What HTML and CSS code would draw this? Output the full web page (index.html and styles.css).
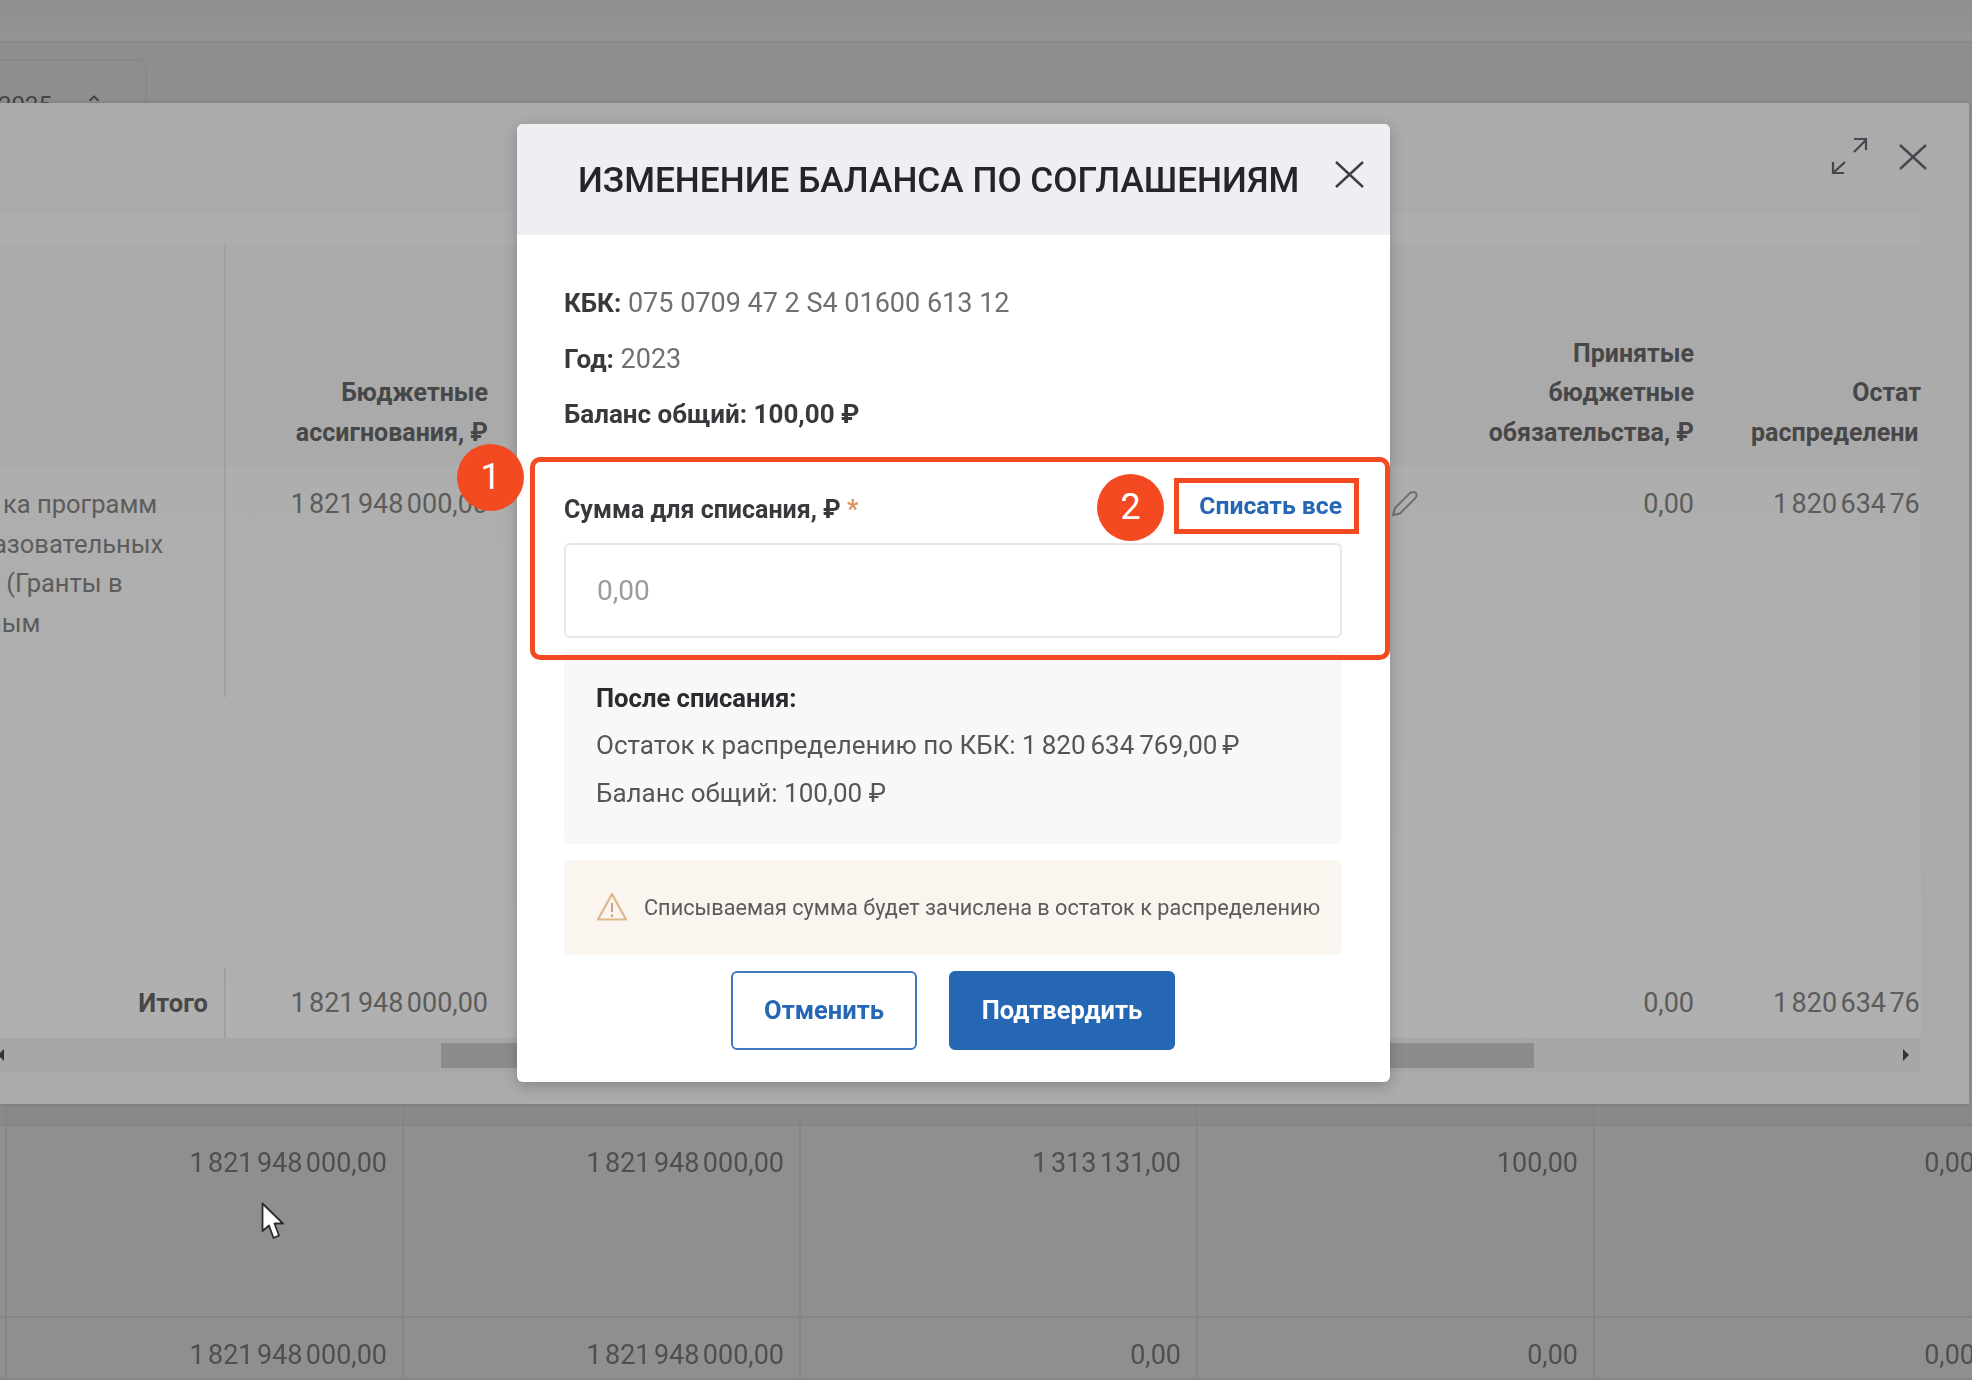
FILE: index.html
```html
<!DOCTYPE html>
<html lang="ru">
<head>
<meta charset="utf-8">
<title>Изменение баланса по соглашениям</title>
<link rel="stylesheet" href="styles.css">
</head>
<body>
<div class="screen">
  <div class="page">
    <div class="topbar"></div>
    <div class="toolbar"><div class="year-tab"><span class="year-text">2025 ⌄ ⌃</span></div></div>
    <div class="under-panel"></div>
    <div class="bg-head">
      <div class="bg-cell stub"></div><div class="bg-cell"></div><div class="bg-cell"></div><div class="bg-cell"></div><div class="bg-cell"></div><div class="bg-cell"></div>
    </div>
    <div class="bg-row tall">
      <div class="bg-cell stub"></div>
      <div class="bg-cell">1 821 948 000,00</div>
      <div class="bg-cell">1 821 948 000,00</div>
      <div class="bg-cell">1 313 131,00</div>
      <div class="bg-cell">100,00</div>
      <div class="bg-cell">0,00</div>
    </div>
    <div class="bg-row">
      <div class="bg-cell stub"></div>
      <div class="bg-cell">1 821 948 000,00</div>
      <div class="bg-cell">1 821 948 000,00</div>
      <div class="bg-cell">0,00</div>
      <div class="bg-cell">0,00</div>
      <div class="bg-cell">0,00</div>
    </div>
    <svg class="cursor" viewBox="0 0 24 38" width="24" height="38"><path d="M1.5 1.5V29L8 23.5L12.5 36L18 33.5L13.5 21.5H22Z" fill="#fff" stroke="#2b2b2b" stroke-width="1.8" stroke-linejoin="round"/></svg>
  </div>

  <section class="panel">
    <header class="panel-head">
      <svg class="expand-icon" viewBox="0 0 37 38" width="37" height="38"><path d="M2 36L14 25M23 15L35 3M23 2H35V13M2 25V36H13" fill="none" stroke="#45484f" stroke-width="2.2"/></svg>
      <svg class="panel-close" viewBox="0 0 28 26" width="28" height="26"><path d="M1 1L27 25M27 1L1 25" fill="none" stroke="#45484f" stroke-width="2.4"/></svg>
    </header>
    <div class="tbl">
      <div class="tbl-head">
        <div class="th th-stub"></div>
        <div class="th">Бюджетные<br>ассигнования, ₽</div>
        <div class="th">Принятые<br>бюджетные<br>обязательства, ₽</div>
        <div class="th th-clip"><span class="clip-line">Остат</span><span class="clip-line">распределени</span></div>
      </div>
      <div class="tbl-row">
        <div class="td-stub">
          <div class="stub-line line-a">ка программ</div>
          <div class="stub-line line-b">азовательных</div>
          <div class="stub-line line-c">я (Гранты в</div>
          <div class="stub-line line-d">ным</div>
        </div>
        <div class="td">1 821 948 000,00</div>
        <div class="td">0,00</div>
        <div class="td td-clip">1 820 634 76</div>
      </div>
      <div class="tbl-total">
        <div class="total-label">Итого</div>
        <div class="td">1 821 948 000,00</div>
        <div class="td">0,00</div>
        <div class="td td-clip">1 820 634 76</div>
      </div>
      <div class="scrollbar">
        <span class="arrow arrow-left"></span>
        <span class="thumb"></span>
        <span class="arrow arrow-right"></span>
      </div>
    </div>
    <svg class="pencil" viewBox="0 0 28 28" width="28" height="28"><path d="M3 25L5 18L20 3C22 1.5 25 1.5 26 3C27 5 26.500 7 25 8.500L10 23.500Z" fill="none" stroke="#6e7076" stroke-width="2"/></svg>
  </section>

  <section class="modal">
    <header class="modal-head">
      <h1 class="modal-title">ИЗМЕНЕНИЕ БАЛАНСА ПО СОГЛАШЕНИЯМ</h1>
      <svg class="modal-close" viewBox="0 0 29 27" width="29" height="27"><path d="M1 1L28 26M28 1L1 26" fill="none" stroke="#3d3f45" stroke-width="2.4"/></svg>
    </header>
    <div class="modal-body">
      <p class="meta"><b>КБК:</b> 075 0709 47 2 S4 01600 613 12</p>
      <p class="meta"><b>Год:</b> 2023</p>
      <p class="meta"><b>Баланс общий: 100,00 ₽</b></p>
      <div class="field-head">
        <span class="field-label">Сумма для списания, ₽ <i class="req">*</i></span>
        <a class="write-all">Списать все</a>
      </div>
      <div class="input"><span class="placeholder">0,00</span></div>
      <div class="after">
        <p class="after-title">После списания:</p>
        <p class="after-line">Остаток к распределению по КБК: <span class="money">1 820 634 769,00 ₽</span></p>
        <p class="after-line">Баланс общий: 100,00 ₽</p>
      </div>
      <div class="warn">
        <svg class="warn-icon" viewBox="0 0 32 30" width="32" height="30"><path d="M16 2L30 27.500H2Z" fill="none" stroke="#dfb78d" stroke-width="2.2" stroke-linejoin="round"/><path d="M16 11V20M16 22.500V25" stroke="#c9a27c" stroke-width="2"/></svg>
        <span class="warn-text">Списываемая сумма будет зачислена в остаток к распределению</span>
      </div>
      <div class="actions">
        <button class="btn btn-ghost">Отменить</button>
        <button class="btn btn-main">Подтвердить</button>
      </div>
    </div>
    <div class="mark-box"></div>
    <div class="mark-link"></div>
    <div class="badge badge-one">1</div>
    <div class="badge badge-two">2</div>
  </section>
</div>
</body>
</html>
```

FILE: styles.css
```css
* { box-sizing: border-box; }
html, body { margin: 0; padding: 0; }
body { width: 1972px; height: 1380px; overflow: hidden; background: #8e8e8e; font-family: Roboto, "Noto Sans", sans-serif; }
p, h1 { margin: 0; }
.screen { position: relative; width: 1972px; height: 1380px; overflow: hidden; filter: blur(0.7px); }

/* dimmed page behind */
.page { display: flex; flex-direction: column; height: 100%; color: #4f4f4f; font-size: 27px; word-spacing: -3.3px; }
.topbar { height: 43px; background: linear-gradient(#8f8f8f, #949494); border-bottom: 2px solid #888; }
.toolbar { height: 60px; padding-top: 16px; background: #8e8e8e; }
.year-tab { width: 147px; height: 60px; border: 2px solid #888; border-left: 0; border-radius: 0 8px 0 0; padding: 30px 0 0 0; font-size: 24px; color: #444; word-spacing: 0; }
.year-text { margin-left: -2px; }
.under-panel { height: 1001px; }
.bg-head, .bg-row { display: grid; grid-template-columns: 7px repeat(5, 397px); }
.bg-head { height: 23px; background: #898989; border-bottom: 2px solid #848484; }
.bg-row { height: 192px; background: #8f8f8f; border-bottom: 2px solid #858585; }
.bg-cell { border-right: 2px solid #858585; padding: 21px 15px 0 0; text-align: right; line-height: 32px; white-space: nowrap; }
.bg-row:last-of-type { height: 62px; }
.bg-row .stub, .bg-head .stub { padding: 0; }
.cursor { position: absolute; left: 261px; top: 1202px; }

/* middle window */
.panel { position: absolute; left: 0; top: 103px; width: 1969px; height: 1001px; background: #ababab; box-shadow: 0 0 4px rgba(0,0,0,.15); }
.panel-head { position: relative; height: 110px; }
.expand-icon { position: absolute; left: 1831px; top: 34px; }
.panel-close { position: absolute; left: 1899px; top: 41px; }
.tbl { width: 1921px; padding-top: 32px; background: linear-gradient(#adadad, #b0b0b0); }
.tbl-head, .tbl-row, .tbl-total { display: grid; grid-template-columns: 226px 262px 1206px 227px; }
.tbl-head { height: 221px; background: #aaaaaa; }
.th { display: flex; flex-direction: column; justify-content: flex-end; align-items: flex-end; text-align: right; font-weight: 700; font-size: 25px; line-height: 39.5px; color: #474747; padding-bottom: 14px; white-space: nowrap; }
.th-stub { border-right: 2px solid #a0a0a0; }
.th-clip { overflow: hidden; align-items: flex-start; padding-left: 0; text-align: left; }
.clip-line { display: block; width: 227px; text-align: right; white-space: nowrap; }
.clip-line + .clip-line { text-align: left; padding-left: 57px; }
.tbl-row { height: 502px; align-items: start; }
.td-stub { height: 231px; border-right: 2px solid #a0a0a0; padding-top: 19px; color: #5c5c5c; font-size: 25.5px; line-height: 39.6px; white-space: nowrap; overflow: hidden; }
.line-a { margin-left: 3px; }
.line-b { margin-left: -7px; }
.line-c { margin-left: -14px; }
.line-d { margin-left: -13px; }
.td { font-size: 27px; word-spacing: -3.3px; line-height: 39.6px; color: #5c5c5c; text-align: right; white-space: nowrap; padding-top: 19px; }
.td-clip { overflow: hidden; text-align: left; padding-left: 79px; }
.tbl-total { height: 70px; align-items: start; }
.total-label { height: 70px; border-right: 2px solid #a0a0a0; font-weight: 700; font-size: 25.5px; line-height: 70px; color: #474747; text-align: right; padding-right: 16px; }
.tbl-total .td { padding-top: 16px; }
.scrollbar { display: flex; align-items: center; justify-content: space-between; height: 34px; background: #a7a7a7; position: relative; }
.thumb { position: absolute; left: 441px; top: 5px; width: 1093px; height: 25px; background: #8c8c8c; }
.arrow { width: 0; height: 0; border-top: 6px solid transparent; border-bottom: 6px solid transparent; }
.arrow-left { border-right: 6px solid #333; margin-left: -2px; }
.arrow-right { border-left: 6px solid #333; margin-right: 12px; }
.pencil { position: absolute; left: 1390px; top: 387px; }

/* modal */
.modal { position: absolute; left: 517px; top: 124px; width: 873px; height: 958px; background: #fff; border-radius: 6px; box-shadow: 0 4px 14px rgba(0,0,0,.22); }
.modal-head { display: flex; align-items: center; height: 111px; padding-left: 61px; background: #eeeff3; border-radius: 6px 6px 0 0; }
.modal-title { font-size: 35.2px; font-weight: 500; line-height: 112px; color: #23252b; white-space: nowrap; width: 757px; }
.modal-close { margin-top: -10px; }
.modal-body { padding: 41px 48px 0 47px; }
.meta { font-size: 27px; line-height: 55.5px; color: #707070; }
.meta b { color: #38393d; font-weight: 700; font-size: 26px; }
.field-head { display: flex; justify-content: space-between; align-items: center; height: 52px; margin-top: 39px; margin-bottom: 9px; }
.field-label { font-size: 25px; font-weight: 700; color: #38393d; margin-top: 4px; }
.req { color: #e0905c; font-style: normal; }
.write-all { font-size: 24.7px; font-weight: 700; color: #2566b5; margin-top: -5px; }
.input { height: 95px; border: 2px solid #e6e7eb; border-radius: 6px; padding-left: 31px; display: flex; align-items: center; }
.placeholder { font-size: 28px; color: #9c9c9c; }
.after { margin-top: 12px; height: 194px; padding: 25px 32px 0; background: #f8f8f8; border-radius: 6px; font-size: 26px; line-height: 47.5px; color: #55565a; white-space: nowrap; }
.after-title { font-weight: 700; color: #2a2b2f; font-size: 25.6px; }
.money { word-spacing: -1.5px; }
.warn { display: flex; align-items: center; gap: 16px; margin-top: 16px; height: 95px; padding: 0 0 0 32px; background: #faf5ef; border-radius: 6px; }
.warn-text { font-size: 21.7px; color: #5b5b5b; white-space: nowrap; }
.actions { display: flex; justify-content: center; gap: 32px; margin-top: 16px; }
.btn { height: 79px; border-radius: 6px; font: 700 25.5px Roboto, "Noto Sans", sans-serif; }
.btn-ghost { width: 186px; background: #fff; border: 2px solid #3f78bd; color: #2566b5; }
.btn-main { width: 226px; background: #2566b5; border: 2px solid #2566b5; color: #fff; }

/* annotations */
.mark-box { position: absolute; left: 13px; top: 333px; width: 860px; height: 203px; border: 5px solid #f44a22; border-radius: 10px; }
.mark-link { position: absolute; left: 657px; top: 354px; width: 185px; height: 56px; border: 5px solid #f44a22; }
.badge { position: absolute; width: 67px; height: 67px; border-radius: 50%; background: #f44a22; color: #fff; font-size: 36px; line-height: 67px; text-align: center; }
.badge-one { left: -60px; top: 320px; }
.badge-two { left: 580px; top: 350px; }
```
